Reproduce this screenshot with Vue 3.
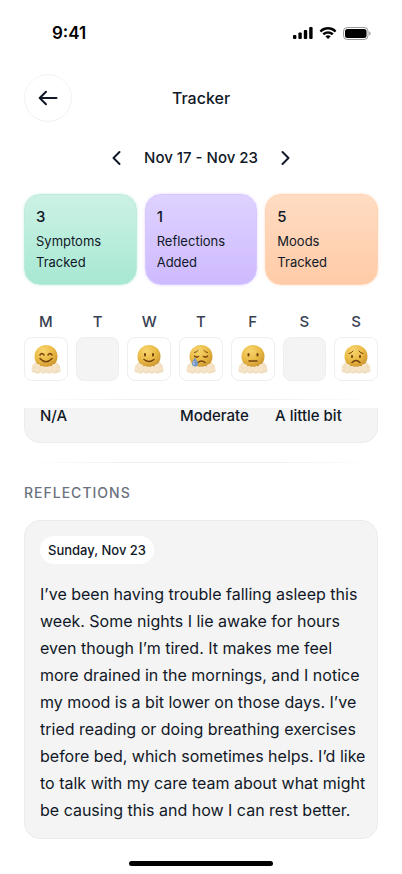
<script setup>
import { ref } from 'vue'

const stats = [
  { count: 3, line1: 'Symptoms', line2: 'Tracked', tone: 'mint' },
  { count: 1, line1: 'Reflections', line2: 'Added', tone: 'violet' },
  { count: 5, line1: 'Moods', line2: 'Tracked', tone: 'peach' },
]

const days = [
  { letter: 'M', name: 'Monday', mood: 'happy' },
  { letter: 'T', name: 'Tuesday', mood: null },
  { letter: 'W', name: 'Wednesday', mood: 'content' },
  { letter: 'T', name: 'Thursday', mood: 'crying' },
  { letter: 'F', name: 'Friday', mood: 'neutral' },
  { letter: 'S', name: 'Saturday', mood: null },
  { letter: 'S', name: 'Sunday', mood: 'worried' },
]

// Cloud puffs behind and in front of each face: [cx, cy, r]
const backPuffs = [[8, 46, 6], [52, 46, 6], [11, 41, 5], [49, 41, 5]]
const frontPuffs = [
  [6, 52, 5], [54, 52, 5], [13, 46, 6], [47, 46, 6], [22, 50, 6], [38, 50, 6],
  [30, 51, 6], [13, 53, 6], [47, 53, 6], [24, 54, 5], [36, 54, 5],
]

const reflection = ref(
  'I’ve been having trouble falling asleep this week. Some nights I lie awake for hours even though I’m tired. It makes me feel more drained in the mornings, and I notice my mood is a bit lower on those days. I’ve tried reading or doing breathing exercises before bed, which sometimes helps. I’d like to talk with my care team about what might be causing this and how I can rest better.'
)
</script>

<template>
  <div class="screen">
    <div class="status">
      <span class="time">9:41</span>
      <div class="status-icons">
        <svg width="20" height="12" viewBox="0 0 20 12" aria-hidden="true">
          <rect x="0" y="8" width="3.4" height="4" rx="1" />
          <rect x="5.4" y="5.6" width="3.4" height="6.4" rx="1" />
          <rect x="10.8" y="3" width="3.4" height="9" rx="1" />
          <rect x="16.2" y="0" width="3.4" height="12" rx="1" />
        </svg>
        <svg width="18" height="13" viewBox="0 0 18 13" aria-hidden="true">
          <path d="M9 2.6c2.4 0 4.7.9 6.4 2.6.1.1.3.1.5 0l1.3-1.3c.1-.1.1-.4 0-.5C12.6-1 5.4-1 .8 3.4c-.1.1-.1.4 0 .5l1.3 1.3c.1.1.3.1.5 0C4.3 3.5 6.6 2.6 9 2.6z" />
          <path d="M9 6.7c1.3 0 2.6.5 3.6 1.4.1.1.4.1.5 0l1.300-1.300c.1-.1.1-.4 0-.5-3-2.900-7.700-2.900-10.700 0-.1.1-.1.4 0 .5L5 8.100c.1.1.3.1.5 0 .9-.9 2.200-1.400 3.500-1.400z" />
          <path d="M11.500 9.500c.1-.1.1-.3 0-.4-1.400-1.200-3.500-1.200-4.900 0-.1.1-.1.3 0 .4l2.200 2.300c.1.1.3.1.5 0z" />
        </svg>
        <svg width="28" height="13" viewBox="0 0 28 13" aria-hidden="true">
          <rect x="0.5" y="0.5" width="24.5" height="12" rx="3.8" fill="none" stroke="#000" stroke-opacity=".4" />
          <rect x="2" y="2" width="21.5" height="9" rx="2.5" />
          <path d="M26.2 4.5v4c.8-.3 1.4-1.1 1.4-2s-.6-1.7-1.4-2z" fill-opacity=".4" />
        </svg>
      </div>
    </div>

    <header class="header">
      <button class="back" type="button" aria-label="Back">
        <svg width="24" height="24" viewBox="0 0 24 24" aria-hidden="true">
          <path d="M20.5 12H4M10 5.7L3.7 12l6.3 6.3" />
        </svg>
      </button>
      <h1>Tracker</h1>
    </header>

    <nav class="week-nav" aria-label="Week">
      <button type="button" aria-label="Previous week">
        <svg width="24" height="24" viewBox="0 0 24 24" aria-hidden="true"><path d="M15.500 6l-6 6 6 6" /></svg>
      </button>
      <span>Nov 17 - Nov 23</span>
      <button type="button" aria-label="Next week">
        <svg width="24" height="24" viewBox="0 0 24 24" aria-hidden="true"><path d="M8.500 6l6 6-6 6" /></svg>
      </button>
    </nav>

    <section class="stats">
      <article v-for="s in stats" :key="s.line1" class="stat" :class="s.tone">
        <strong>{{ s.count }}</strong>
        <p>{{ s.line1 }}<br />{{ s.line2 }}</p>
      </article>
    </section>

    <section class="days">
      <div v-for="d in days" :key="d.name" class="day">
        <span>{{ d.letter }}</span>
        <div class="tile" :class="{ empty: !d.mood }">
          <svg v-if="d.mood" width="30" height="30" viewBox="0 0 60 60" role="img" :aria-label="d.mood">
            <defs>
              <radialGradient :id="'face-' + d.mood" cx=".38" cy=".25" r=".85">
                <stop offset="0" stop-color="#f8d56f" />
                <stop offset=".5" stop-color="#eabb45" />
                <stop offset="1" stop-color="#c48a2a" />
              </radialGradient>
              <radialGradient :id="'puff-' + d.mood" cx=".45" cy=".3" r=".8">
                <stop offset="0" stop-color="#f8e8cf" />
                <stop offset=".6" stop-color="#f3e0c2" />
                <stop offset="1" stop-color="#e6cda6" />
              </radialGradient>
            </defs>
            <circle v-for="(p, i) in backPuffs" :key="'b' + i" :cx="p[0]" :cy="p[1]" :r="p[2]" :fill="`url(#puff-${d.mood})`" />
            <circle cx="30" cy="25" r="23" :fill="`url(#face-${d.mood})`" />
            <circle v-for="(p, i) in frontPuffs" :key="'f' + i" :cx="p[0]" :cy="p[1]" :r="p[2]" :fill="`url(#puff-${d.mood})`" />

            <g v-if="d.mood === 'happy'" class="ink">
              <path d="M18 22q3.500-6 8 0M34 22q4.500-6 8 0" />
              <path d="M18 29q12 13 24 0" />
            </g>
            <g v-else-if="d.mood === 'content'" class="ink">
              <path d="M22 20v3M38 20v3" class="eye" />
              <path d="M20 31q10 8 20 0" />
            </g>
            <g v-else-if="d.mood === 'crying'">
              <g class="ink">
                <path d="M17 17q4 0 7-4M36 13q3 4 7 4" class="thin" />
                <path d="M17 24q4 4 8 1M35 25q4 3 8-1" />
                <path d="M24 37q7-6 14 0" />
              </g>
              <path d="M18 27c-4 6-6 8-6 12a6 6 0 0 0 12 0c0-4-3-6-6-12z" fill="#7598c4" />
              <path d="M16 35q-2 3 0 6" fill="none" stroke="#bfd3ec" stroke-width="2" stroke-linecap="round" />
            </g>
            <g v-else-if="d.mood === 'neutral'" class="ink">
              <path d="M21 20v3M39 20v3" class="eye" />
              <path d="M22 34h16" />
            </g>
            <g v-else class="ink">
              <path d="M16 19q5 0 8-5M36 14q3 5 8 5" class="thin" />
              <path d="M22 24v2M38 24v2" class="eye" />
              <path d="M22 37q8-8 16 0" />
            </g>
          </svg>
        </div>
      </div>
    </section>

    <hr class="rule short" />

    <section class="symptoms">
      <span>N/A</span>
      <span>Moderate</span>
      <span>A little bit</span>
    </section>

    <hr class="rule" />

    <h2>REFLECTIONS</h2>

    <article class="reflection">
      <time datetime="11-23">Sunday, Nov 23</time>
      <p>{{ reflection }}</p>
    </article>

    <div class="home"></div>
  </div>
</template>

<style>
body {
  background: #fff;
}
</style>

<style scoped>
.screen {
  display: flex;
  flex-direction: column;
  padding: 0 24px 8px;
  min-height: 100vh;
  box-sizing: border-box;
  font-family: Inter, "Liberation Sans", sans-serif;
  color: #111827;
  background: #fff;
}
h1,
h2,
p {
  margin: 0;
}
button {
  padding: 0;
  border: 0;
  background: none;
  display: grid;
  place-items: center;
  color: inherit;
}
button svg {
  fill: none;
  stroke: currentColor;
  stroke-width: 2;
  stroke-linecap: round;
  stroke-linejoin: round;
}
.status {
  display: flex;
  justify-content: space-between;
  align-items: center;
  height: 66px;
  padding: 0 7px 0 28px;
  color: #000;
}
.time {
  font-size: 17px;
  font-weight: 600;
}
.status-icons {
  display: flex;
  align-items: center;
  gap: 6px;
}
.header {
  display: grid;
  grid-template-columns: 48px 1fr 48px;
  align-items: center;
  margin-top: 8px;
}
.back {
  width: 48px;
  height: 48px;
  box-sizing: border-box;
  border: 1px solid #f3f3f3;
  border-radius: 50%;
}
h1 {
  font-size: 16px;
  line-height: 24px;
  font-weight: 500;
  text-align: center;
}
.week-nav {
  display: flex;
  justify-content: center;
  align-items: center;
  gap: 16px;
  margin-top: 24px;
  font-size: 15px;
  line-height: 24px;
  font-weight: 500;
}
.stats {
  display: grid;
  grid-template-columns: repeat(3, 1fr);
  gap: 8px;
  margin-top: 24px;
}
.stat {
  padding: 11px;
  border: 1px solid;
  border-radius: 16px;
}
.stat strong {
  display: block;
  font-size: 15px;
  line-height: 22px;
  font-weight: 500;
}
.stat p {
  margin-top: 3px;
  font-size: 13px;
  line-height: 21px;
}
.mint {
  background: linear-gradient(#ccf1e5, #a7e8d3);
  border-color: #bdecdd;
  box-shadow: 0 0 3px #a7e8d399;
}
.violet {
  background: linear-gradient(#ded2ff, #cebaff);
  border-color: #d7c8ff;
  box-shadow: 0 0 3px #cebaff99;
}
.peach {
  background: linear-gradient(#ffdcc3, #ffcba7);
  border-color: #ffd3b3;
  box-shadow: 0 0 3px #ffcba799;
}
.days {
  display: grid;
  grid-template-columns: repeat(7, 1fr);
  gap: 8px;
  margin-top: 25px;
}
.day {
  display: flex;
  flex-direction: column;
  gap: 4px;
  text-align: center;
  font-size: 15px;
  line-height: 23px;
  font-weight: 500;
  color: #374151;
}
.tile {
  display: grid;
  place-items: center;
  box-sizing: border-box;
  aspect-ratio: 1;
  border: 1px solid #eeeeef;
  border-radius: 8px;
}
.tile.empty {
  background: #f4f4f4;
}
.tile svg {
  display: block;
}
.ink {
  fill: none;
  stroke: #75430f;
  stroke-width: 3;
  stroke-linecap: round;
}
.ink .eye {
  stroke-width: 4;
}
.ink .thin {
  stroke-width: 2;
}
.rule {
  width: 100%;
  height: 1px;
  margin: 19px 0 0;
  border: 0;
  background: linear-gradient(90deg, transparent, #f0f0f0 30%, #f0f0f0 70%, transparent);
}
.rule.short {
  margin: 18px 0 8px;
}
.symptoms {
  display: grid;
  grid-template-columns: 140px 95px 1fr;
  padding: 0 15px 19px;
  border: solid #ececed;
  border-width: 0 1px 1px;
  border-radius: 0 0 16px 16px;
  background: #f4f4f4;
  font-size: 15px;
  line-height: 15px;
  font-weight: 500;
}
h2 {
  margin-top: 20px;
  font-size: 14px;
  line-height: 20px;
  font-weight: 500;
  letter-spacing: 1px;
  color: #6b7280;
}
.reflection {
  margin-top: 17px;
  padding: 15px 5px 14px 15px;
  border: 1px solid #ececed;
  border-radius: 16px;
  background: #f4f4f4;
}
.reflection time {
  display: block;
  width: fit-content;
  padding: 0 8px;
  border-radius: 14px;
  background: #fff;
  font-size: 13px;
  line-height: 28px;
  font-weight: 500;
}
.reflection p {
  margin-top: 17px;
  font-size: 16px;
  line-height: 27px;
}
.home {
  align-self: center;
  width: 144px;
  height: 5px;
  margin-top: 22px;
  border-radius: 3px;
  background: #000;
}
</style>
